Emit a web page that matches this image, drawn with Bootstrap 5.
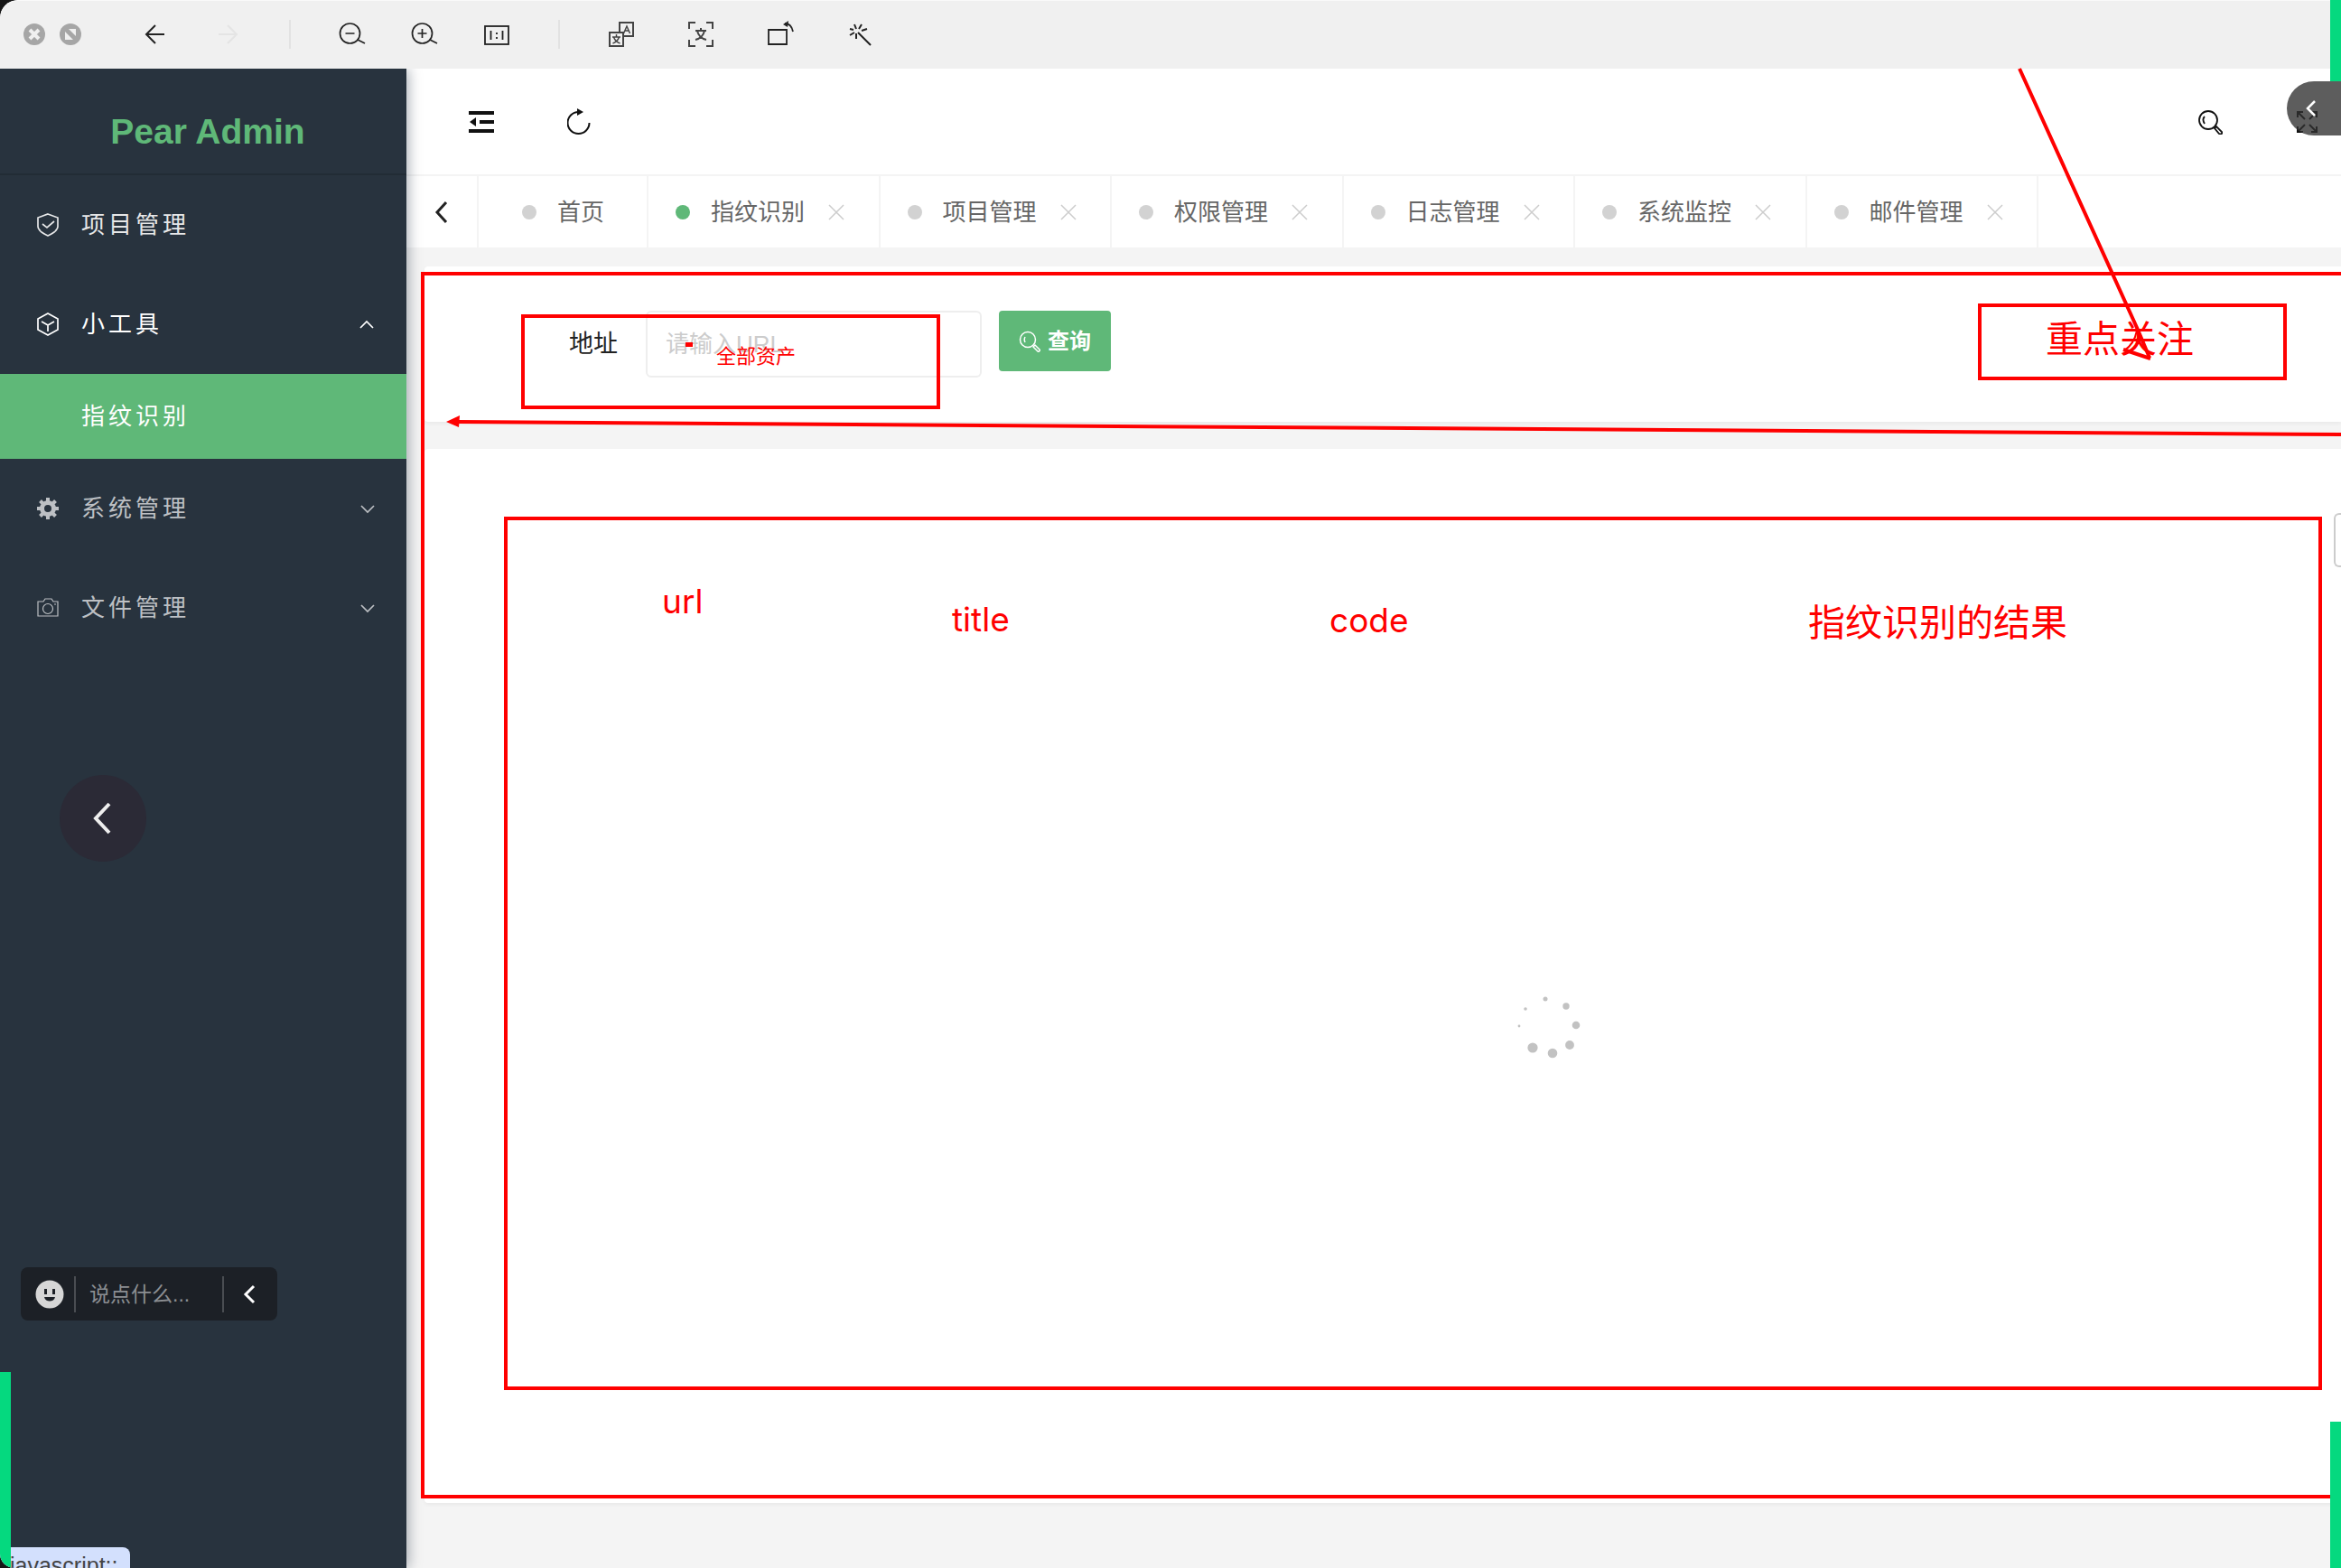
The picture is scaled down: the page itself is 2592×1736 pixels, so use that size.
<!DOCTYPE html>
<html lang="zh-CN">
<head>
<meta charset="utf-8">
<meta name="viewport" content="width=device-width, initial-scale=1">
<title>Pear Admin</title>
<link href="https://cdn.jsdelivr.net/npm/bootstrap@5.3.0/dist/css/bootstrap.min.css" rel="stylesheet">
<style>
  :root { --pear: #5fb878; --side: #28333e; --note: #ff0000; --edge: #05d97f; }
  body { font-family: "Liberation Sans", "Noto Sans CJK SC", sans-serif; font-size: 26px; line-height: 40px; background: #151515; color: #222; }
  svg { display: block; flex: none; fill: none; stroke: currentColor; }
  button { color: inherit; }
  .bare { border: 0; background: none; padding: 0; flex: none; }
  .page-shell { border-radius: 20px 0 0 16px; background: #f4f4f4; }

  .viewer-bar { position: relative; z-index: 3; height: 76px; background: #f0f0f0; border-top: 1px solid #fafafa; padding: 0 0 2px 26px; color: #222; border-top-left-radius: 20px; }
  .viewer-bar .dots { gap: 16px; margin-right: 70px; }
  .viewer-bar .arrows { gap: 56px; }
  .viewer-bar .zooms { gap: 50px; }
  .viewer-bar .tools { gap: 58px; color: #444; }
  .bar-rule { width: 2px; height: 32px; background: #e2e2e2; margin: 0 53px; }
  .bar-rule.first { margin-left: 56px; }

  .side { width: 450px; flex: none; background: var(--side); box-shadow: 2px 0 14px rgba(0,21,41,.35); z-index: 2; }
  .brand { height: 118px; padding: 22px 0 0 10px; font-size: 39px; font-weight: 700; line-height: 96px; color: var(--pear); border-bottom: 2px solid #222c35; }
  .side a { height: 110px; padding: 0 33px 0 40px; color: #bdc0c4; letter-spacing: 4px; text-decoration: none; }
  .side a svg:first-child { margin-right: 24px; }
  .side a.lit { color: #e6e7e8; }
  .side a.open { color: #fff; }
  .side a.sub { height: 94px; padding-left: 90px; background: var(--pear); color: #fff; }

  .top-row { height: 119px; padding: 0 23px 0 69px; border-bottom: 2px solid #f4f4f4; color: #111; }
  .reload { margin-left: 81px; }
  .tab-row { height: 79px; color: #666; }
  .tab-row > * { border-right: 2px solid #f4f4f4; }
  .tab-prev { width: 80px; }
  .tab-home { width: 188px; padding-left: 48px; }
  .tab-list { width: 1539px; border: 0; }
  .tab-item { flex: 1 1 0; padding-left: 30px; border-right: 2px solid #f4f4f4; }
  .spot { width: 16px; height: 16px; border-radius: 50%; background: #d2d2d2; margin-right: 23px; }
  .spot.on { background: var(--pear); }
  .tab-item .bare { margin-left: 25px; color: #ccc; }

  .work { padding: 21px 0 72px 20px; }
  .panel { background: #fff; border-radius: 4px 0 0 4px; box-shadow: 0 2px 4px rgba(0,0,0,.05); }
  .query { height: 172px; padding: 49px 0 0 160px; margin-bottom: 30px; }
  .query label { width: 85px; line-height: 74px; font-size: 27px; }
  .query .form-control { width: 372px; height: 74px; border: 2px solid #eee; border-radius: 6px; font-size: 26px; padding: 0 20px; margin-right: 19px; }
  .query .form-control::placeholder { color: #ccc; }
  .query .btn { height: 67px; width: 124px; padding: 0; border-radius: 4px; background: var(--pear); color: #fff; font-size: 24px; font-weight: 700; }
  .grid-panel { min-height: 1167px; padding-top: 71px; }
  .grid-tool { width: 8px; height: 60px; border: 2px solid #ccc; border-right: 0; border-radius: 6px 0 0 6px; background: #fff; padding: 0; }

  .float-back { left: 66px; top: 858px; width: 96px; height: 96px; border-radius: 50%; background: #2b2a36; color: #eee; z-index: 3; }
  .chat { left: 23px; top: 1403px; width: 284px; height: 59px; border-radius: 8px; background: #1c2026; padding: 0 23px 0 16px; z-index: 3; }
  .chat input { width: 166px; height: 40px; border: solid #4a4d52; border-width: 0 2px; background: none; font-size: 23px; padding: 0 0 0 15px; margin-left: 11px; color: #ddd; }
  .chat input::placeholder { color: #8b8e92; opacity: 1; }
  .edge-tab { right: 0; top: 90px; width: 60px; height: 60px; border-radius: 30px 0 0 30px; background: rgba(50,50,50,.79); color: #fff; z-index: 5; padding-left: 20px; }
  .edge { width: 12px; background: var(--edge); z-index: 4; }
  .edge-rt { right: 0; top: 0; height: 90px; }
  .edge-rb { right: 0; bottom: 0; height: 162px; }
  .edge-lb { left: 0; bottom: 0; height: 217px; }
  .status { left: 0; bottom: 0; width: 144px; height: 23px; padding-left: 11px; background: #d3e0fd; color: #444; border-top-right-radius: 8px; font-size: 25px; z-index: 3; }

  .notes { inset: 0; z-index: 3; pointer-events: none; color: var(--note); overflow: hidden; }
  .notes > * { position: absolute; white-space: nowrap; }
  .frame { border: 4px solid var(--note); }
  .word { font-family: Inter, "Noto Sans CJK SC", sans-serif; font-size: 37px; line-height: 48px; }
  .word.big { font-size: 41px; }
  .word.tiny { font-size: 22px; line-height: 32px; }
</style>
<script src="https://cdn.jsdelivr.net/npm/bootstrap@5.3.0/dist/js/bootstrap.bundle.min.js"></script>
</head>
<body>
<div class="page-shell position-relative overflow-hidden min-vh-100 d-flex flex-column">

  <header class="viewer-bar d-flex align-items-center">
    <div class="dots d-flex">
      <button class="bare" aria-label="关闭"><svg width="24" height="24"><circle cx="12" cy="12" r="12" fill="#a6a6a6" stroke="none"/><path d="M7 7l10 10M17 7L7 17" stroke="#f0f0f0" stroke-width="4"/></svg></button>
      <button class="bare" aria-label="缩放"><svg width="24" height="24"><circle cx="12" cy="12" r="12" fill="#a6a6a6" stroke="none"/><path d="M10 6h8v8zM6 9v9h9z" fill="#f0f0f0" stroke="none"/></svg></button>
    </div>
    <div class="arrows d-flex">
      <button class="bare" aria-label="后退"><svg width="24" height="24" stroke-width="2"><path d="M22 12H2M12 2L2 12l10 10"/></svg></button>
      <button class="bare" aria-label="前进" disabled><svg width="24" height="24" stroke-width="2" color="#e4e4e4"><path d="M2 12h20M12 2l10 10-10 10"/></svg></button>
    </div>
    <span class="bar-rule first"></span>
    <div class="zooms d-flex">
      <button class="bare" aria-label="缩小"><svg width="30" height="30" stroke-width="1.7"><circle cx="12.500" cy="14" r="11"/><path d="M7.500 14h10M21 21l8 4"/></svg></button>
      <button class="bare" aria-label="放大"><svg width="30" height="30" stroke-width="1.700"><circle cx="12.500" cy="14" r="11"/><path d="M7.500 14h10M12.500 9v10M21 21l8 4"/></svg></button>
      <button class="bare" aria-label="实际大小"><svg width="30" height="30" stroke-width="1.800"><rect x="2" y="6" width="26" height="20"/><path d="M8.500 11v10M21.500 11v10M15 13v2M15 18v2"/></svg></button>
    </div>
    <span class="bar-rule"></span>
    <div class="tools d-flex">
      <button class="bare" aria-label="翻译"><svg width="30" height="30" stroke-width="2"><path d="M13 12V2h15v15h-10M2 13h15v15H2z"/><path d="M17.500 14l3.500-8 3.500 8M19 11h4M5 18h9M9.500 15v3M6.500 18c1 3 4 6 7 7M12.500 18c-1 3-4 6-7 7" stroke-width="1.500"/></svg></button>
      <button class="bare" aria-label="识别文字"><svg width="30" height="30" stroke-width="2"><path d="M2 9V2h7M21 2h7v7M28 21v7h-7M9 28H2v-7M9 11h12M15 8v3M11 11c1 5 5 9 10 10M19 11c-1 5-5 9-10 10"/></svg></button>
      <button class="bare" aria-label="旋转"><svg width="30" height="30" stroke-width="1.800" color="#222"><path d="M2 10h20v16H2zM20 3c6 0 8 4 9 9"/><path d="M24 0l-6 4 5 3z" fill="currentColor" stroke="none"/></svg></button>
      <button class="bare" aria-label="美化"><svg width="30" height="30" stroke-width="2" color="#222"><path d="M13 13l14 14M11 9L9 4M14 9l3-5M8 10L4 9M17 11l6-2M9 13l-5 3M11 14v6"/></svg></button>
    </div>
  </header>

  <div class="d-flex flex-grow-1">
    <aside class="side">
      <div class="brand text-center">Pear Admin</div>
      <nav>
        <a href="#" class="lit d-flex align-items-center"><svg width="26" height="26" stroke-width="1.700"><path d="M13 1l11 4v10c0 5-7 8-11 10C9 23 2 20 2 15V5z"/><path d="M7 12l5 4 8-7"/></svg>项目管理</a>
        <a href="#" class="open d-flex align-items-center"><svg width="26" height="26" stroke-width="1.700"><path d="M13 1l11 6v12l-11 6-11-6V7zM6 10l7 4 7-4M13 14v7"/></svg>小工具<svg class="ms-auto" width="22" height="22" stroke-width="1.700"><path d="M4 15l7-7 7 7"/></svg></a>
        <a href="#" class="sub d-flex align-items-center" aria-current="page">指纹识别</a>
        <a href="#" class="d-flex align-items-center"><svg width="26" height="26"><circle cx="13" cy="13" r="6.500" stroke-width="5"/><path d="M13 1v5M13 20v5M1 13h5M20 13h5M4.500 4.500L8 8M18 18l3.500 3.500M21.500 4.500L18 8M8 18l-3.500 3.500" stroke-width="4"/></svg>系统管理<svg class="ms-auto" width="22" height="22" stroke-width="1.700"><path d="M5 8l7 7 7-7"/></svg></a>
        <a href="#" class="d-flex align-items-center"><svg width="26" height="26" stroke-width="1.200"><path d="M2 6h6l2-3h7l2 3h5v16H2zM20 9h2"/><circle cx="13" cy="14" r="5.500"/></svg>文件管理<svg class="ms-auto" width="22" height="22" stroke-width="1.700"><path d="M5 8l7 7 7-7"/></svg></a>
      </nav>
    </aside>

    <main class="flex-grow-1">
      <div class="top-row bg-white d-flex align-items-center">
        <button class="bare" aria-label="收起菜单"><svg width="28" height="26" stroke-width="4"><path d="M0 3h28M12 13h16M0 23h28"/><path d="M8 8v10l-7-5z" fill="currentColor" stroke="none"/></svg></button>
        <button class="bare reload" aria-label="刷新"><svg width="28" height="30" stroke-width="2" viewBox="14 0 28 30"><path d="M26.500 4a12 12 0 1 0 12 12"/><path d="M25 0l7 4-7 4z" fill="currentColor" stroke="none"/></svg></button>
        <button class="bare ms-auto" aria-label="搜索"><svg width="28" height="28" stroke-width="1.800"><circle cx="12" cy="12" r="10"/><path d="M8 8c-2 2-2 5 0 8M19 21l2-2 6 6c1 2-1 3-3 2z"/></svg></button>
        <button class="bare" aria-label="全屏"><svg width="108" height="26" stroke-width="2"><path d="M83 8V2h6M84 3l7 7M98 2h6v6M103 3l-7 7M83 18v6h6M84 23l7-7M98 24h6v-6M103 23l-7-7"/></svg></button>
      </div>
      <div class="tab-row bg-white d-flex">
        <button class="bare tab-prev d-flex align-items-center justify-content-center border-top-0 border-bottom-0 border-start-0" aria-label="向前"><svg width="20" height="26" stroke-width="3" color="#222"><path d="M15 2L5 13l10 11"/></svg></button>
        <div class="tab-home d-flex align-items-center"><span class="spot"></span>首页</div>
        <div class="tab-list d-flex">
          <div class="tab-item d-flex align-items-center"><span class="spot on"></span>指纹识别<button class="bare" aria-label="关闭"><svg width="20" height="20" stroke-width="1.500"><path d="M2 2l16 16M18 2L2 18"/></svg></button></div>
          <div class="tab-item d-flex align-items-center"><span class="spot"></span>项目管理<button class="bare" aria-label="关闭"><svg width="20" height="20" stroke-width="1.500"><path d="M2 2l16 16M18 2L2 18"/></svg></button></div>
          <div class="tab-item d-flex align-items-center"><span class="spot"></span>权限管理<button class="bare" aria-label="关闭"><svg width="20" height="20" stroke-width="1.500"><path d="M2 2l16 16M18 2L2 18"/></svg></button></div>
          <div class="tab-item d-flex align-items-center"><span class="spot"></span>日志管理<button class="bare" aria-label="关闭"><svg width="20" height="20" stroke-width="1.500"><path d="M2 2l16 16M18 2L2 18"/></svg></button></div>
          <div class="tab-item d-flex align-items-center"><span class="spot"></span>系统监控<button class="bare" aria-label="关闭"><svg width="20" height="20" stroke-width="1.500"><path d="M2 2l16 16M18 2L2 18"/></svg></button></div>
          <div class="tab-item d-flex align-items-center"><span class="spot"></span>邮件管理<button class="bare" aria-label="关闭"><svg width="20" height="20" stroke-width="1.500"><path d="M2 2l16 16M18 2L2 18"/></svg></button></div>
        </div>
      </div>

      <div class="work">
        <form class="panel query d-flex align-items-start">
          <label for="addr">地址</label>
          <input id="addr" type="text" class="form-control" placeholder="请输入URL">
          <button type="button" class="btn d-flex align-items-center justify-content-center gap-2"><svg width="24" height="24" stroke-width="1.500"><circle cx="10" cy="10" r="8.500"/><path d="M7 7c-1 2-1 4 0 6M16 18l2-2 5 5c1 1-1 3-2 2z"/></svg>查询</button>
        </form>
        <section class="panel grid-panel d-flex flex-column align-items-end">
          <button class="grid-tool" aria-label="筛选列"></button>
        </section>
      </div>
    </main>
  </div>

  <div class="notes position-absolute">
    <svg width="2592" height="1736" viewBox="0 0 2592 1736">
      <g fill="#c2c2c2" stroke="none"><circle cx="1711" cy="1106" r="2.500"/><circle cx="1734" cy="1114" r="3.700"/><circle cx="1745" cy="1135" r="4.300"/><circle cx="1738" cy="1157" r="4.900"/><circle cx="1719" cy="1166" r="5.300"/><circle cx="1697" cy="1160" r="5.600"/><circle cx="1689" cy="1117" r="1.800"/><circle cx="1682" cy="1136" r="1.400"/></g>
      <path d="M504 467L2592 481" stroke-width="4"/>
      <path d="M494 467l15-7-1 13z" fill="currentColor" stroke="none"/>
      <path d="M2236 76L2367 365L2380 396" stroke-width="4"/>
      <path d="M2381 397L2351 387" stroke-width="4"/>
      <path d="M2352 388c8-5 12-12 14-22" stroke-width="2"/>
      <rect x="759" y="379" width="8" height="5" fill="currentColor" stroke="none"/>
    </svg>
    <div class="frame" style="left:466px;top:301px;width:2140px;height:1358px"></div>
    <div class="frame" style="left:577px;top:348px;width:464px;height:105px"></div>
    <div class="frame" style="left:2190px;top:336px;width:342px;height:85px"></div>
    <div class="frame" style="left:558px;top:572px;width:2013px;height:967px"></div>
    <span class="word tiny" style="left:793px;top:378px">全部资产</span>
    <span class="word big" style="left:2265px;top:351px">重点关注</span>
    <span class="word" style="left:733px;top:642px">url</span>
    <span class="word" style="left:1054px;top:662px">title</span>
    <span class="word" style="left:1472px;top:663px">code</span>
    <span class="word big" style="left:2002px;top:665px">指纹识别的结果</span>
  </div>

  <button class="bare float-back position-absolute d-flex align-items-center justify-content-center" aria-label="返回"><svg width="26" height="40" stroke-width="4"><path d="M20 4L5 20l15 16"/></svg></button>
  <div class="chat position-absolute d-flex align-items-center">
    <svg width="32" height="32"><circle cx="16" cy="16" r="15.500" fill="#d6d6d6" stroke="none"/><path d="M11.500 10v6M20.500 10v6" stroke="#1c2026" stroke-width="3"/><path d="M10 19h12c-1 6-11 6-12 0z" fill="#1c2026" stroke="none"/></svg>
    <input type="text" placeholder="说点什么..." aria-label="说点什么">
    <button class="bare ms-auto text-white" aria-label="收起"><svg width="16" height="24" stroke-width="3"><path d="M13 3L4 12l9 9"/></svg></button>
  </div>
  <div class="status position-absolute overflow-hidden">javascript:;</div>
  <span class="edge edge-rt position-absolute"></span>
  <span class="edge edge-rb position-absolute"></span>
  <span class="edge edge-lb position-absolute"></span>
  <button class="bare edge-tab position-absolute d-flex align-items-center" aria-label="展开"><svg width="14" height="22" stroke-width="2.500"><path d="M11 3L3 11l8 8"/></svg></button>
</div>
</body>
</html>
